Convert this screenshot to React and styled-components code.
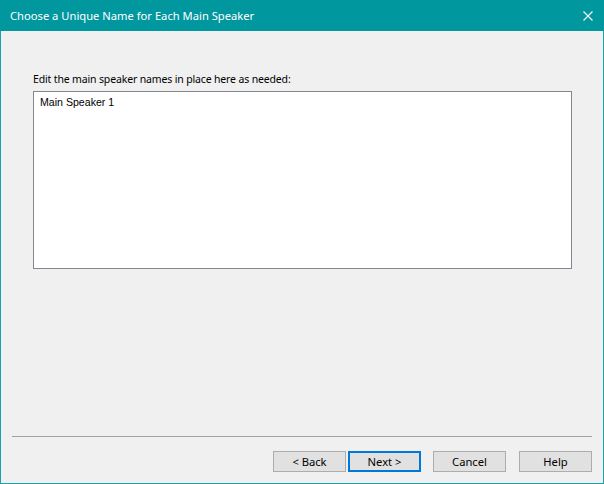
import React from 'react'
import styled, { createGlobalStyle } from 'styled-components'

const Global = createGlobalStyle`
  html, body { margin: 0; padding: 0; background: #f0f0f0; }
  * { box-sizing: border-box; }
`

const Frame = styled.div`
  width: 604px;
  height: 484px;
  display: flex;
  flex-direction: column;
  background: #f0f0f0;
  border: 1px solid #18a2aa;
  border-top: none;
  font-family: "Noto Sans", "Open Sans", sans-serif;
  font-size: 12px;
  color: #000;
`

const TitleBar = styled.div`
  height: 31px;
  margin: 0 -1px;
  display: flex;
  align-items: center;
  justify-content: space-between;
  padding: 0 11px 0 10px;
  background: #00979f;
  color: #fff;
  font-size: 11.2px;
`

const CloseBtn = styled.svg`
  width: 10px;
  height: 10px;
  display: block;
`

const Content = styled.div`
  flex: 1;
  display: flex;
  flex-direction: column;
  padding: 40px 31px 0 32px;
`

const Label = styled.div`
  font-size: 10.5px;
  letter-spacing: -0.15px;
  line-height: 17px;
  height: 20px;
`

const ListBox = styled.div`
  height: 178px;
  background: #fff;
  border: 1px solid #828790;
  padding: 2px 6px;
  font-family: "Liberation Sans", Arial, sans-serif;
  font-size: 10.6px;
  line-height: 16px;
`

const Footer = styled.div`
  display: flex;
  flex-direction: column;
  padding: 0 11px 11px 11px;
`

const Separator = styled.div`
  height: 1px;
  background: #a0a0a0;
  margin-bottom: 14px;
`

const Buttons = styled.div`
  display: flex;
  justify-content: flex-end;
`

const Button = styled.button`
  width: 73px;
  height: 21px;
  margin-left: ${p => p.$gap || 0}px;
  padding: 0;
  background: #e1e1e1;
  border: ${p => (p.$default ? '2px solid #0078d7' : '1px solid #adadad')};
  font-family: "Noto Sans", "Open Sans", sans-serif;
  font-size: 11.2px;
  color: #000;
  line-height: 1;
`

export default function App() {
  return (
    <>
      <Global />
      <Frame>
        <TitleBar>
          <span>Choose a Unique Name for Each Main Speaker</span>
          <CloseBtn viewBox="0 0 10 10">
            <path d="M0.5 0.5 L9.5 9.5 M9.5 0.5 L0.5 9.5" stroke="#fff" strokeWidth="1.1" fill="none" />
          </CloseBtn>
        </TitleBar>
        <Content>
          <Label>Edit the main speaker names in place here as needed:</Label>
          <ListBox>Main Speaker 1</ListBox>
        </Content>
        <Footer>
          <Separator />
          <Buttons>
            <Button>&lt; Back</Button>
            <Button $default $gap={2}>Next &gt;</Button>
            <Button $gap={12}>Cancel</Button>
            <Button $gap={13}>Help</Button>
          </Buttons>
        </Footer>
      </Frame>
    </>
  )
}
